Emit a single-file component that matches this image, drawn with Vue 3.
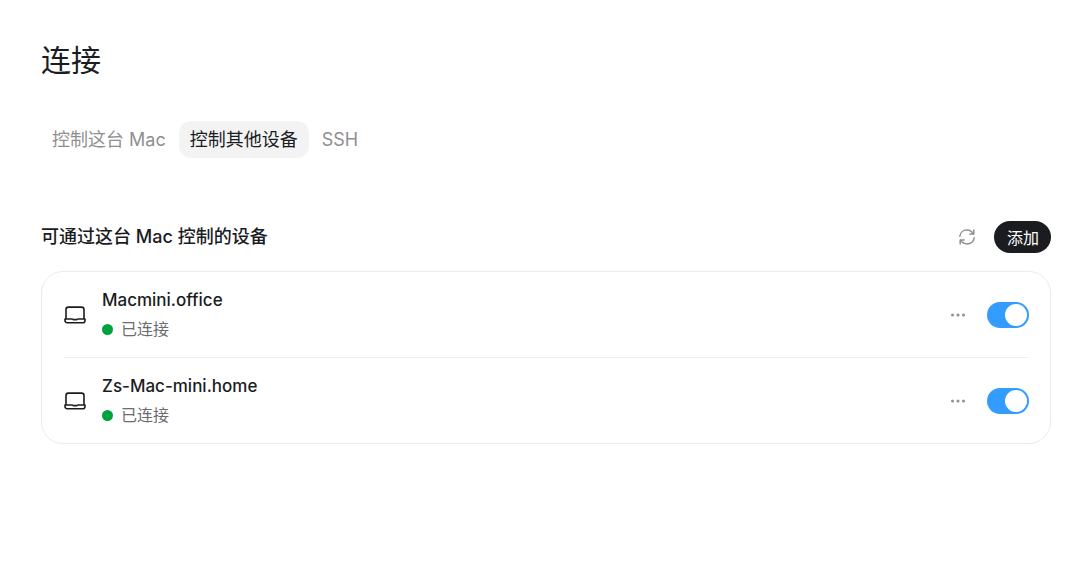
<script setup>
import { ref } from 'vue'

const tabs = [
  { id: 'this', label: '控制这台 Mac' },
  { id: 'other', label: '控制其他设备' },
  { id: 'ssh', label: 'SSH' },
]
const active = ref('other')
const devices = ref([
  { name: 'Macmini.office', status: '已连接', enabled: true },
  { name: 'Zs-Mac-mini.home', status: '已连接', enabled: true },
])
</script>

<template>
  <main class="page">
    <h1 class="title">连接</h1>

    <nav class="tabs" role="tablist">
      <button
        v-for="tab in tabs"
        :key="tab.id"
        type="button"
        role="tab"
        class="tab"
        :class="{ active: active === tab.id }"
        :aria-selected="active === tab.id"
        @click="active = tab.id"
      >{{ tab.label }}</button>
    </nav>

    <section class="section">
      <header class="head">
        <h2 class="heading">可通过这台 Mac 控制的设备</h2>
        <button type="button" class="icon-button" aria-label="刷新">
          <svg width="18" height="18" viewBox="0 0 18 18" fill="none" stroke="currentColor" stroke-width="1.5" stroke-linecap="round" stroke-linejoin="round">
            <path d="M1.800 8.200C2.300 4.600 5.300 2.100 8.900 2.100c2.600 0 4.800 1.300 6.200 3.500" />
            <path d="M15.800 2v4h-4" />
            <path d="M16.200 9.800c-.5 3.600-3.500 6.100-7.100 6.100-2.600 0-4.800-1.300-6.200-3.500" />
            <path d="M2.200 16v-4h4" />
          </svg>
        </button>
        <button type="button" class="add">添加</button>
      </header>

      <ul class="card">
        <li v-for="device in devices" :key="device.name" class="row">
          <svg class="laptop" width="22" height="18" viewBox="0 0 22 18" fill="none" stroke="currentColor" stroke-width="1.6" stroke-linejoin="round">
            <path d="M2 13V3.500C2 2 2.900 1.100 4.400 1.100h13.200c1.500 0 2.400.9 2.400 2.400V13" />
            <path d="M1 13h7.200c.5 0 .7.600 1.300.6h3c.6 0 .8-.6 1.300-.6H21v1.400c0 1.400-.8 2.300-2.200 2.300H3.200C1.800 16.700 1 15.800 1 14.400z" />
          </svg>
          <div class="info">
            <span class="name">{{ device.name }}</span>
            <span class="status"><i class="dot"></i>{{ device.status }}</span>
          </div>
          <button type="button" class="icon-button more" :aria-label="device.name + ' 更多'">
            <svg width="16" height="4" viewBox="0 0 16 4" fill="currentColor">
              <circle cx="2.500" cy="2" r="1.500" />
              <circle cx="8" cy="2" r="1.500" />
              <circle cx="13.500" cy="2" r="1.500" />
            </svg>
          </button>
          <input v-model="device.enabled" type="checkbox" role="switch" class="switch" :aria-label="device.name" />
        </li>
      </ul>
    </section>
  </main>
</template>

<style>
body {
  margin: 0;
  background: #fff;
}
</style>

<style scoped>
.page {
  padding: 40px 29px 40px 41px;
  font-family: Inter, "Noto Sans CJK SC", sans-serif;
  color: #1a1c1f;
}
button {
  font: inherit;
  border: 0;
  padding: 0;
  cursor: pointer;
}
.title {
  margin: 0;
  font-size: 30px;
  line-height: 40px;
  font-weight: 400;
}
.tabs {
  display: flex;
  gap: 2px;
  margin-top: 41px;
}
.tab {
  height: 37px;
  padding: 1px 11px 0;
  border-radius: 12px;
  background: transparent;
  color: #8f8f90;
  font-size: 18px;
  line-height: 24px;
}
.tab.active {
  background: #f3f3f3;
  color: #1a1c1f;
}
.section {
  margin-top: 63px;
}
.head {
  display: flex;
  align-items: center;
}
.heading {
  flex: 1;
  margin: 0;
  font-size: 18px;
  line-height: 26px;
  font-weight: 500;
}
.icon-button {
  display: flex;
  background: transparent;
  color: #8f8f90;
}
.add {
  height: 32px;
  margin-left: 18px;
  padding: 1px 12px 0 13px;
  border-radius: 16px;
  background: #1a1c1f;
  color: #fff;
  font-size: 16px;
  line-height: 24px;
}
.card {
  margin: 18px 0 0;
  padding: 0 21px 0 22px;
  list-style: none;
  border: 1px solid #ebebeb;
  border-radius: 22px;
}
.row {
  display: flex;
  align-items: center;
  height: 85px;
}
.row + .row {
  border-top: 1px solid #f0f0f0;
}
.laptop {
  flex: none;
}
.info {
  flex: 1;
  display: flex;
  flex-direction: column;
  gap: 5px;
  margin-left: 16px;
}
.name {
  font-size: 17px;
  line-height: 24px;
  font-weight: 500;
}
.status {
  display: flex;
  align-items: center;
  font-size: 16px;
  line-height: 24px;
  color: #6b6c6e;
}
.dot {
  width: 11px;
  height: 11px;
  margin-right: 8px;
  border-radius: 50%;
  background: #00a240;
}
.more {
  color: #8f8f90;
}
.switch {
  appearance: none;
  width: 42px;
  height: 26px;
  margin: 0 0 0 21px;
  border-radius: 13px;
  background: #d9d9d9;
  display: flex;
  align-items: center;
  padding: 0 2px;
  box-sizing: border-box;
  cursor: pointer;
}
.switch::before {
  content: "";
  width: 22px;
  height: 22px;
  border-radius: 50%;
  background: #fff;
}
.switch:checked {
  background: #339cff;
  justify-content: flex-end;
}
</style>
